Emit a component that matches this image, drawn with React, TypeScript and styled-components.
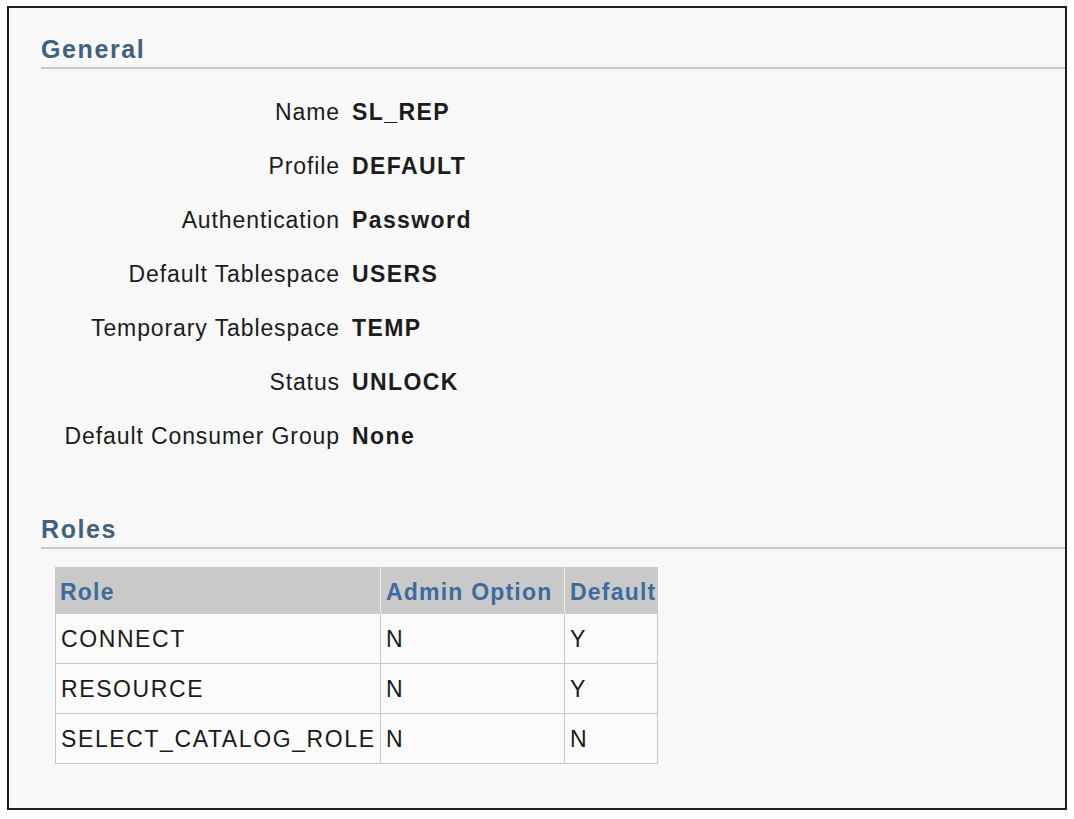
import styled, { createGlobalStyle } from 'styled-components'

const fields = [
  { label: 'Name', value: 'SL_REP' },
  { label: 'Profile', value: 'DEFAULT' },
  { label: 'Authentication', value: 'Password' },
  { label: 'Default Tablespace', value: 'USERS' },
  { label: 'Temporary Tablespace', value: 'TEMP' },
  { label: 'Status', value: 'UNLOCK' },
  { label: 'Default Consumer Group', value: 'None' },
]

const roles = [
  { role: 'CONNECT', admin: 'N', def: 'Y' },
  { role: 'RESOURCE', admin: 'N', def: 'Y' },
  { role: 'SELECT_CATALOG_ROLE', admin: 'N', def: 'N' },
]

const App = () => {
  return (
    <>
      <GlobalStyle />
      <Panel>
        <SectionHeader>General</SectionHeader>
        <FieldList>
          {fields.map((f) => (
            <FieldRow key={f.label}>
              <Label>{f.label}</Label>
              <Value>{f.value}</Value>
            </FieldRow>
          ))}
        </FieldList>

        <SectionHeader $spaced>Roles</SectionHeader>
        <RolesTable>
          <colgroup>
            <col style={{ width: 326 }} />
            <col style={{ width: 184 }} />
            <col style={{ width: 93 }} />
          </colgroup>
          <thead>
            <tr>
              <HeadCell>Role</HeadCell>
              <HeadCell>Admin Option</HeadCell>
              <HeadCell>Default</HeadCell>
            </tr>
          </thead>
          <tbody>
            {roles.map((r) => (
              <tr key={r.role}>
                <Cell>{r.role}</Cell>
                <Cell>{r.admin}</Cell>
                <Cell>{r.def}</Cell>
              </tr>
            ))}
          </tbody>
        </RolesTable>
      </Panel>
    </>
  )
}

export default App

const GlobalStyle = createGlobalStyle`
  html, body {
    margin: 0;
    padding: 0;
    background: #ffffff;
  }
  body {
    font-family: "Liberation Sans", Arial, sans-serif;
    color: #1c1c1c;
  }
`

const Panel = styled.div`
  box-sizing: border-box;
  width: 1060px;
  height: 804px;
  margin: 6px 0 0 7px;
  padding: 26px 0 0 32px;
  border: 2px solid #1e1e1e;
  background: #f8f8f8;
`

const SectionHeader = styled.h2<{ $spaced?: boolean }>`
  margin: ${(p) => (p.$spaced ? '51px' : '0')} 0 0 0;
  padding: 0 0 3px 0;
  font-size: 25px;
  line-height: 30px;
  font-weight: bold;
  letter-spacing: 1.6px;
  color: #40607c;
  border-bottom: 2px solid #c8c8c8;
`

const FieldList = styled.div`
  margin-top: 16px;
  display: flex;
  flex-direction: column;
`

const FieldRow = styled.div`
  display: grid;
  grid-template-columns: 299px 1fr;
  column-gap: 12px;
  align-items: center;
  height: 54px;
  font-size: 23px;
  line-height: 26px;
`

const Label = styled.span`
  text-align: right;
  letter-spacing: 0.9px;
  white-space: nowrap;
`

const Value = styled.span`
  font-weight: bold;
  letter-spacing: 1.4px;
  white-space: nowrap;
`

const RolesTable = styled.table`
  margin: 18px 0 0 14px;
  width: 603px;
  table-layout: fixed;
  border-collapse: separate;
  border-spacing: 0;
  font-size: 23px;
  line-height: 26px;
`

const HeadCell = styled.th`
  box-sizing: border-box;
  height: 47px;
  padding: 12px 0 9px 5px;
  text-align: left;
  white-space: nowrap;
  font-weight: bold;
  letter-spacing: 1.2px;
  color: #3d6b9e;
  background: #c9c9c9;
  border-right: 1px solid #ececec;

  &:last-child {
    border-right: none;
  }
`

const Cell = styled.td`
  box-sizing: border-box;
  height: 49px;
  padding: 12px 0 11px 5px;
  white-space: nowrap;
  letter-spacing: 1.6px;
  color: #1a1a1a;
  background: #fbfbfb;
  border-right: 1px solid #c8c8c8;
  border-bottom: 1px solid #c8c8c8;

  &:first-child {
    border-left: 1px solid #c8c8c8;
  }
`
